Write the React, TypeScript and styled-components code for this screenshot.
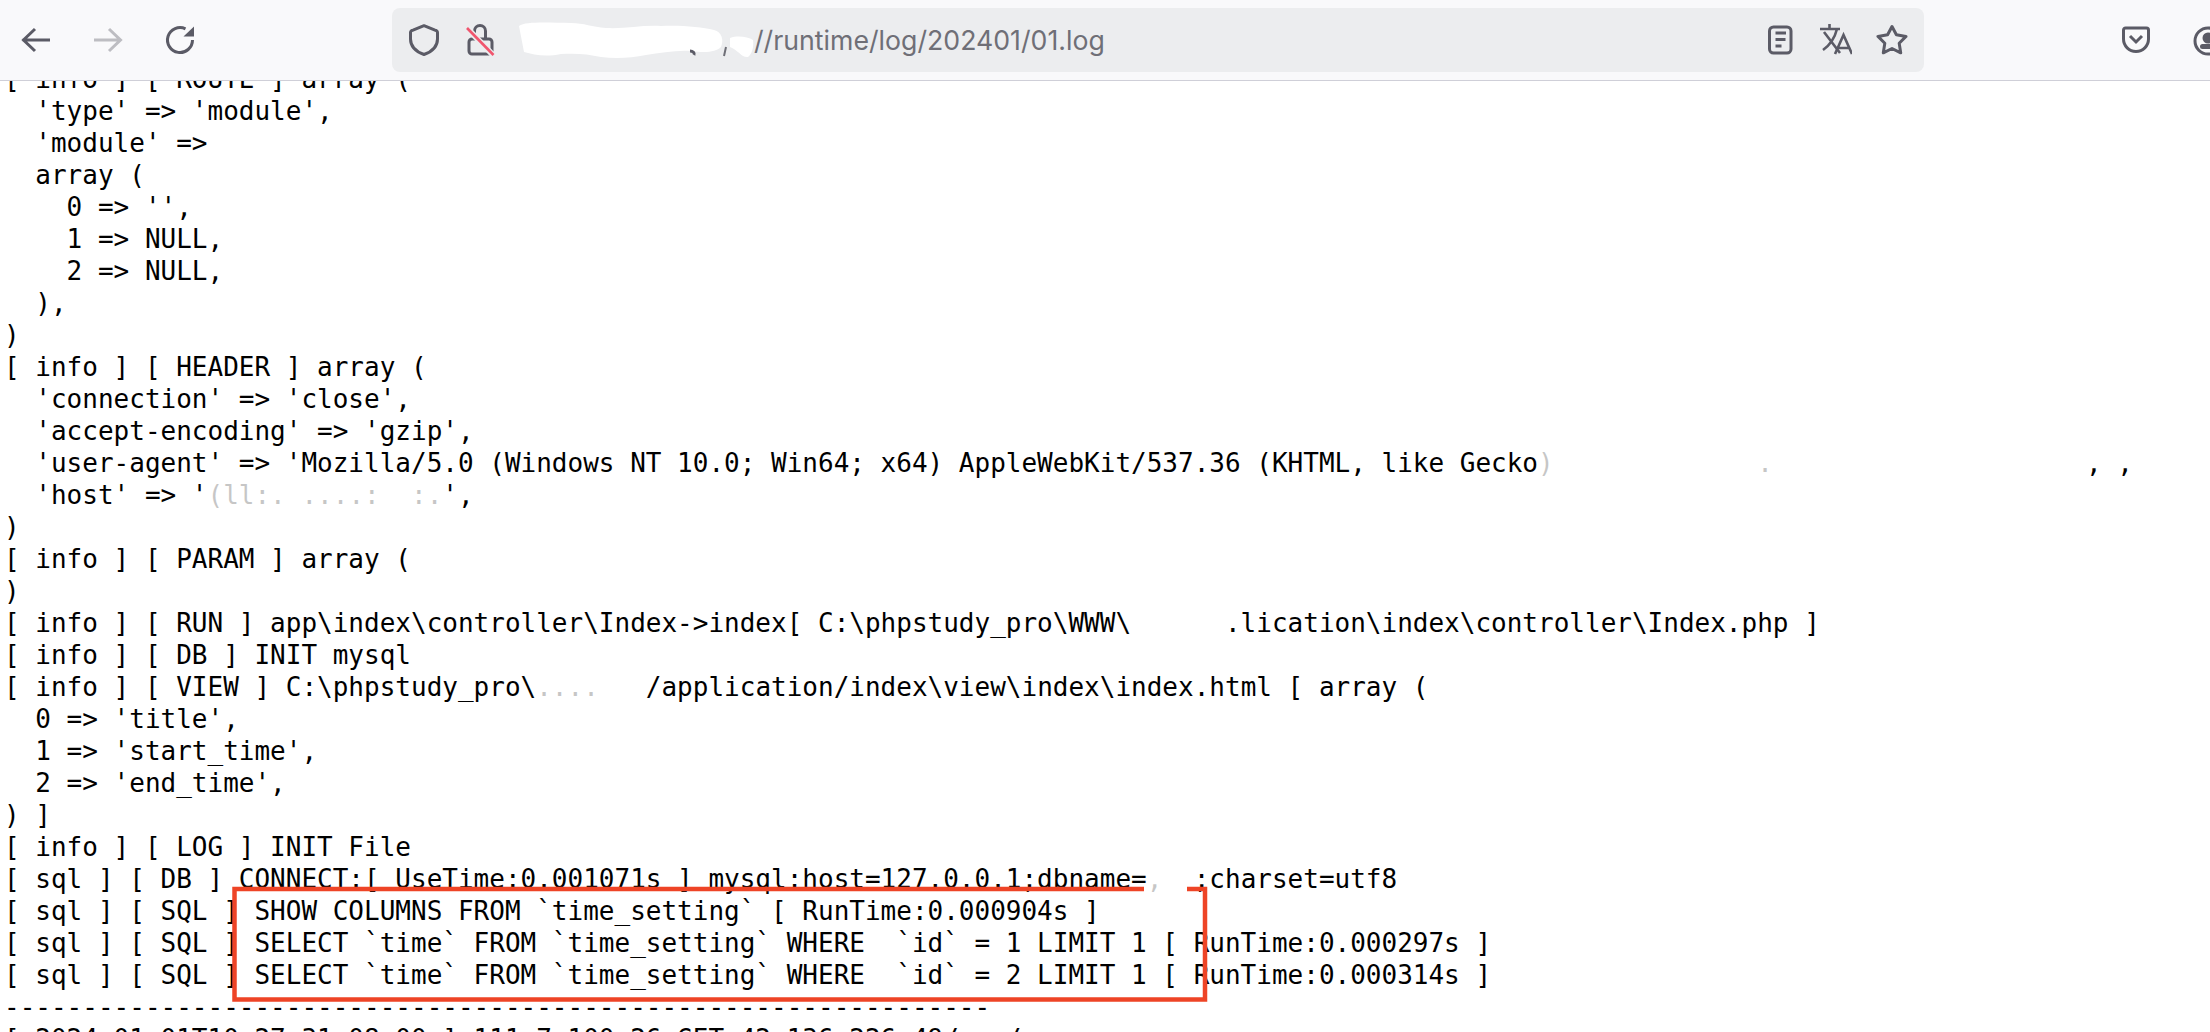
import React from "react";
import styled, { createGlobalStyle } from "styled-components";

const GlobalStyle = createGlobalStyle`
  html, body { margin: 0; padding: 0; height: 100%; overflow: hidden; background: #fff; }
  #root { height: 100%; }
`;

const Page = styled.div`
  position: relative;
  display: flex;
  flex-direction: column;
  height: 100%;
  overflow: hidden;
`;

const Toolbar = styled.header`
  display: flex;
  align-items: center;
  flex: 0 0 80px;
  box-sizing: content-box;
  height: 80px;
  padding-left: 20px;
  background: #f9f9fb;
  border-bottom: 1px solid #cfcfd8;
  overflow: hidden;
  position: relative;
  z-index: 1;
`;

const NavGroup = styled.nav`
  display: flex;
  gap: 40px;
  margin-right: 196px;
  flex: none;
`;

const UrlBar = styled.div`
  display: flex;
  align-items: center;
  flex: 0 0 1532px;
  height: 64px;
  box-sizing: border-box;
  padding: 0 16px 0 16px;
  background: #ecedef;
  border-radius: 8px;
`;

const IconRow = styled.div<{ $gap: number }>`
  display: flex;
  align-items: center;
  gap: ${(p) => p.$gap}px;
  flex: none;
`;

const UrlText = styled.div`
  display: flex;
  align-items: center;
  flex: 1;
  margin-left: 20px;
  font-family: Inter, "Liberation Sans", sans-serif;
  font-size: 26.7px;
  color: #6f6f77;
  white-space: pre;
`;

const Blot = styled.svg`
  flex: none;
  width: 238px;
  height: 40px;
`;

const ExtraTools = styled.div`
  display: flex;
  gap: 40px;
  margin-left: 196px;
  flex: none;
`;

const Icon = styled.svg<{ $color?: string }>`
  flex: none;
  width: 32px;
  height: 32px;
  fill: none;
  stroke: ${(p) => p.$color ?? "#5b5b66"};
  stroke-width: 3;
`;

const Viewport = styled.main`
  flex: 1;
  overflow: hidden;
  min-height: 0;
`;

const Log = styled.pre`
  margin: -18px 0 0 0;
  padding-left: 4px;
  font-family: "DejaVu Sans Mono", "Liberation Mono", monospace;
  font-size: 26px;
  line-height: 32px;
  color: #000;
  white-space: pre;
`;

const LogLine = styled.div`
  height: 32px;
`;

const Faint = styled.span`
  opacity: 0.22;
`;

const Annotation = styled.svg`
  position: absolute;
  left: 230px;
  top: 885px;
  width: 980px;
  height: 120px;
  fill: none;
  stroke: #ee4426;
  stroke-width: 4.5;
  z-index: 2;
`;

const dashes = "-".repeat(63);

const lines = [
  "[ info ] [ ROUTE ] array (",
  "  'type' => 'module',",
  "  'module' => ",
  "  array (",
  "    0 => '',",
  "    1 => NULL,",
  "    2 => NULL,",
  "  ),",
  ")",
  "[ info ] [ HEADER ] array (",
  "  'connection' => 'close',",
  "  'accept-encoding' => 'gzip',",
  "  'user-agent' => 'Mozilla/5.0 (Windows NT 10.0; Win64; x64) AppleWebKit/537.36 (KHTML, like Gecko§)§             §.§                    , ,",
  "  'host' => '§(ll:. ....:  :.§',",
  ")",
  "[ info ] [ PARAM ] array (",
  ")",
  "[ info ] [ RUN ] app\\index\\controller\\Index->index[ C:\\phpstudy_pro\\WWW\\      .lication\\index\\controller\\Index.php ]",
  "[ info ] [ DB ] INIT mysql",
  "[ info ] [ VIEW ] C:\\phpstudy_pro\\§....§   /application/index\\view\\index\\index.html [ array (",
  "  0 => 'title',",
  "  1 => 'start_time',",
  "  2 => 'end_time',",
  ") ]",
  "[ info ] [ LOG ] INIT File",
  "[ sql ] [ DB ] CONNECT:[ UseTime:0.001071s ] mysql:host=127.0.0.1;dbname=§,§  ;charset=utf8",
  "[ sql ] [ SQL ] SHOW COLUMNS FROM `time_setting` [ RunTime:0.000904s ]",
  "[ sql ] [ SQL ] SELECT `time` FROM `time_setting` WHERE  `id` = 1 LIMIT 1 [ RunTime:0.000297s ]",
  "[ sql ] [ SQL ] SELECT `time` FROM `time_setting` WHERE  `id` = 2 LIMIT 1 [ RunTime:0.000314s ]",
  dashes,
  "[ 2024-01-01T10:27:31+08:00 ] 111.7.100.26 GET 42.136.226.49/   /",
];

function Row({ text }: { text: string }) {
  const parts = text.split("§");
  return (
    <LogLine>
      {parts.map((p, i) => (i % 2 ? <Faint key={i}>{p}</Faint> : <React.Fragment key={i}>{p}</React.Fragment>))}
    </LogLine>
  );
}

export default function App() {
  return (
    <Page>
      <GlobalStyle />
      <Toolbar>
        <NavGroup>
          <Icon viewBox="0 0 32 32">
            <path d="M2.5 16H30M15 5 3.5 16 15 27" />
          </Icon>
          <Icon viewBox="0 0 32 32" $color="#bdbdc2">
            <path d="M2 16H29M17 5 28.5 16 17 27" />
          </Icon>
          <Icon viewBox="0 0 32 32">
            <path d="M28.5 16A12.5 12.5 0 1 1 21.5 4.8" />
            <path d="M30 2.5V12.5H19.5Z" fill="#5b5b66" stroke="none" />
          </Icon>
        </NavGroup>
        <UrlBar>
          <IconRow $gap={24}>
            <Icon viewBox="0 0 32 32">
              <path d="M16 1.7 27 6.2A2.5 2.5 0 0 1 29.5 9V15C29.5 23 23 28 16 30.5 9 28 2.5 23 2.5 15V9A2.5 2.5 0 0 1 5 6.2Z" strokeLinejoin="round" />
            </Icon>
            <Icon viewBox="0 0 32 32">
              <path d="M10.5 15V7A5.5 5.5 0 0 1 21.5 7V15" />
              <rect x="5" y="15" width="23" height="15" rx="3" />
              <path d="M2 3 29 31" stroke="#ecedef" strokeWidth="6" />
              <path d="M3 4 29.5 31" stroke="#f0566e" strokeWidth="2.6" />
            </Icon>
          </IconRow>
          <UrlText>
            <Blot viewBox="0 0 238 40">
              <path
                d="M3 6C10 1 35 3 55 3 68 3 76 7 90 8 110 9 125 5 145 6 165 5 185 7 198 10 206 12 208 20 205 27 200 32 190 33 175 31 160 30 145 33 130 35 115 38 100 39 85 37 72 34 60 33 45 34 30 37 18 35 8 32 2 24 2 16Z"
                fill="#fff"
                stroke="none"
              />
              <path d="M214 18C222 15 232 17 237 20 238 27 236 34 232 37 226 38 222 30 214 27Z" fill="#fff" stroke="none" />
              <path d="M174 31c3 0 5 2 4 4" stroke="#5b5b66" strokeWidth="3" fill="none" />
              <path d="M210 27l-2 9" stroke="#6f6f77" strokeWidth="2" fill="none" />
            </Blot>
            //runtime/log/202401/01.log
          </UrlText>
          <IconRow $gap={24}>
            <Icon viewBox="0 0 32 32">
              <rect x="5.5" y="3" width="21.5" height="26" rx="4" />
              <path d="M11.5 9H22M11.5 15.5H21.5M11.5 22H17.5" />
            </Icon>
            <Icon viewBox="0 0 32 32">
              <path d="M0 5H20M9.5 0V5M17 5C15 13 10 21 3 26M4 8 20 29" strokeWidth="2.6" />
              <path d="M15 30 23.5 11 32 30M18 24H29" strokeWidth="2.6" />
            </Icon>
            <Icon viewBox="0 0 32 32">
              <path d="M16 2.5 20.4 10.8 30 12.4 23.2 19.2 24.7 28.8 16 24.5 7.3 28.8 8.8 19.2 2 12.4 11.6 10.8Z" strokeLinejoin="round" />
            </Icon>
          </IconRow>
        </UrlBar>
        <ExtraTools>
          <Icon viewBox="0 0 32 32">
            <path d="M3.5 6A2 2 0 0 1 5.5 4H26.5A2 2 0 0 1 28.5 6V15A12.5 12.5 0 0 1 3.5 15Z" />
            <path d="M10 12 16 18 22 12" />
          </Icon>
          <Icon viewBox="0 0 32 32">
            <circle cx="16" cy="17" r="13" />
            <circle cx="16" cy="14" r="5.5" fill="#5b5b66" stroke="none" />
            <rect x="8" y="20" width="16" height="5" rx="2.5" fill="#5b5b66" stroke="none" />
          </Icon>
        </ExtraTools>
      </Toolbar>
      <Viewport>
        <Log>
          {lines.map((l, i) => (
            <Row key={i} text={l} />
          ))}
        </Log>
      </Viewport>
      <Annotation viewBox="0 0 980 120">
        <path d="M957 4H975V114.5H4.5V4H914" />
      </Annotation>
    </Page>
  );
}
